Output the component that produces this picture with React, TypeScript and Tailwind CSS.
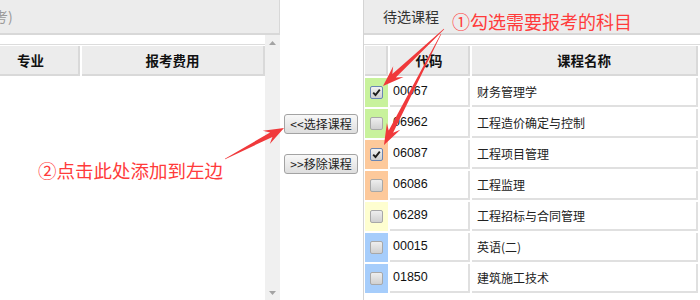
import React from "react";

const cjk = { fontFamily: '"Noto Sans CJK SC", "Microsoft YaHei", sans-serif' };
const lat = { fontFamily: '"Liberation Sans", "Noto Sans CJK SC", sans-serif' };

function arrowPoints(
  x1: number,
  y1: number,
  x2: number,
  y2: number,
  headLen: number,
  headW: number,
  neckW: number,
  tailW: number
) {
  const dx = x2 - x1;
  const dy = y2 - y1;
  const L = Math.hypot(dx, dy);
  const ux = dx / L;
  const uy = dy / L;
  const px = -uy;
  const py = ux;
  const bx = x2 - ux * headLen;
  const by = y2 - uy * headLen;
  const nx = x2 - ux * headLen * 0.72;
  const ny = y2 - uy * headLen * 0.72;
  const pts: [number, number][] = [
    [x1 + (px * tailW) / 2, y1 + (py * tailW) / 2],
    [nx + (px * neckW) / 2, ny + (py * neckW) / 2],
    [bx + (px * headW) / 2, by + (py * headW) / 2],
    [x2, y2],
    [bx - (px * headW) / 2, by - (py * headW) / 2],
    [nx - (px * neckW) / 2, ny - (py * neckW) / 2],
    [x1 - (px * tailW) / 2, y1 - (py * tailW) / 2],
  ];
  return pts.map((p) => `${p[0].toFixed(1)},${p[1].toFixed(1)}`).join(" ");
}

function Check({ checked }: { checked?: boolean }) {
  return (
    <div
      className={
        checked
          ? "w-[13px] h-[13px] rounded-[2px] border border-[#6a86b4] bg-gradient-to-b from-[#f2f2f2] to-[#cfcfcf] flex items-center justify-center"
          : "w-[13px] h-[13px] rounded-[2px] border border-[#a8a8a8] bg-gradient-to-b from-[#eeeeee] to-[#d0d0d0] flex items-center justify-center"
      }
    >
      {checked && (
        <svg width="9" height="9" viewBox="0 0 9 9">
          <path d="M1.2 4.6 L3.5 7 L7.8 1.6" stroke="#1e1e1e" strokeWidth="1.9" fill="none" />
        </svg>
      )}
    </div>
  );
}

const rows = [
  { c: "00067", n: "财务管理学", bg: "bg-[#c8f29c]", checked: true },
  { c: "06962", n: "工程造价确定与控制", bg: "bg-[#c8f29c]", checked: false },
  { c: "06087", n: "工程项目管理", bg: "bg-[#fdc99b]", checked: true },
  { c: "06086", n: "工程监理", bg: "bg-[#fdc99b]", checked: false },
  { c: "06289", n: "工程招标与合同管理", bg: "bg-[#fefed0]", checked: false },
  { c: "00015", n: "英语(二)", bg: "bg-[#a6cdfb]", checked: false },
  { c: "01850", n: "建筑施工技术", bg: "bg-[#a6cdfb]", checked: false },
];

function HeadCell({ className, children }: { className: string; children?: React.ReactNode }) {
  return (
    <div
      className={
        "h-[30px] shrink-0 bg-[#ececec] border-r-2 border-b-2 border-[#d9d9d9] flex items-center font-bold text-[13.5px] text-[#111] " +
        className
      }
      style={cjk}
    >
      {children}
    </div>
  );
}

export default function App() {
  return (
    <div className="relative w-[700px] h-[300px] overflow-hidden bg-white flex">
      {/* Left panel */}
      <div className="w-[280px] h-full flex flex-col shrink-0">
        <div className="h-[35px] bg-[#ececec] border-b-2 border-r border-[#d8d8d8] flex items-center overflow-hidden">
          <span className="ml-[-20px] text-[14px] text-[#9a9a9a] whitespace-nowrap" style={cjk}>
            报考)
          </span>
        </div>
        <div className="flex-1 flex">
          <div className="w-[265px] pt-[9px]">
            <div className="border-t border-[#dcdcdc] pt-[1px] flex gap-[2px]">
              <HeadCell className="w-[80px] pl-[17px]">专业</HeadCell>
              <HeadCell className="w-[183px] justify-center">报考费用</HeadCell>
            </div>
          </div>
          <div className="w-[15px] bg-[#f0f0f0] flex flex-col items-center justify-between pt-[6px] pb-[5px]">
            <svg width="7" height="4" viewBox="0 0 7 4">
              <path d="M0 4 L3.5 0 L7 4 Z" fill="#a3a3a3" />
            </svg>
            <svg width="7" height="4" viewBox="0 0 7 4">
              <path d="M0 0 L3.5 4 L7 0 Z" fill="#a3a3a3" />
            </svg>
          </div>
        </div>
      </div>

      {/* Middle buttons */}
      <div className="w-[83px] shrink-0 flex flex-col pl-[4px] pt-[114px] gap-[20px]">
        <button
          className="w-[74px] h-[20px] border border-[#a3a3a3] rounded-[3px] bg-gradient-to-b from-[#f8f8f8] to-[#dedede] text-[12px] text-[#222] flex items-center justify-center leading-none"
          style={cjk}
        >
          &lt;&lt;选择课程
        </button>
        <button
          className="w-[74px] h-[20px] border border-[#a3a3a3] rounded-[3px] bg-gradient-to-b from-[#f8f8f8] to-[#dedede] text-[12px] text-[#222] flex items-center justify-center leading-none"
          style={cjk}
        >
          &gt;&gt;移除课程
        </button>
      </div>

      {/* Right panel */}
      <div className="flex-1 h-full flex flex-col border-l border-[#d4d4d4]">
        <div className="h-[35px] bg-[#ececec] border-b-2 border-[#d8d8d8] flex items-center pl-[19px]">
          <span className="text-[14px] text-[#333]" style={cjk}>
            待选课程
          </span>
        </div>
        <div className="pt-[9px]">
          <div className="border-t border-[#dcdcdc] pt-[1px] pl-[1px] flex flex-col gap-[2px]">
            <div className="flex gap-[2px]">
              <HeadCell className="w-[23px]" />
              <HeadCell className="w-[80px] justify-center">代码</HeadCell>
              <HeadCell className="w-[226px] justify-center">课程名称</HeadCell>
              <HeadCell className="w-[40px]" />
            </div>
            {rows.map((r) => (
              <div key={r.c} className="flex gap-[2px] h-[29px]">
                <div className={"w-[23px] shrink-0 flex items-center justify-center " + r.bg}>
                  <Check checked={r.checked} />
                </div>
                <div
                  className="w-[80px] shrink-0 border-r-2 border-b-2 border-[#e0e0e0] flex items-center pl-[3px] text-[12.5px] text-[#111]"
                  style={lat}
                >
                  {r.c}
                </div>
                <div
                  className="w-[226px] shrink-0 border-r-2 border-b-2 border-[#e0e0e0] flex items-center pl-[5px] text-[12px] text-[#222]"
                  style={cjk}
                >
                  {r.n}
                </div>
                <div className="w-[40px] shrink-0 border-l-2 border-[#e0e0e0]" />
              </div>
            ))}
          </div>
        </div>
      </div>

      {/* Annotations */}
      <div
        className="absolute left-[452px] top-[12px] text-[18px] leading-none text-[#ff3b3b] whitespace-nowrap"
        style={cjk}
      >
        ①勾选需要报考的科目
      </div>
      <div
        className="absolute left-[38px] top-[161px] text-[18.5px] leading-none text-[#ff3b3b] whitespace-nowrap"
        style={cjk}
      >
        ②点击此处添加到左边
      </div>
      <svg className="absolute left-0 top-0 pointer-events-none" width="700" height="300">
        <polygon points={arrowPoints(444, 29, 383, 86, 21, 15, 5, 0.6)} fill="#f0393b" />
        <polygon points={arrowPoints(441, 34, 384, 145, 21, 15, 5, 0.6)} fill="#f0393b" />
        <polygon points={arrowPoints(225, 159, 284, 128, 20, 15, 5, 0.6)} fill="#f0393b" />
      </svg>
    </div>
  );
}
